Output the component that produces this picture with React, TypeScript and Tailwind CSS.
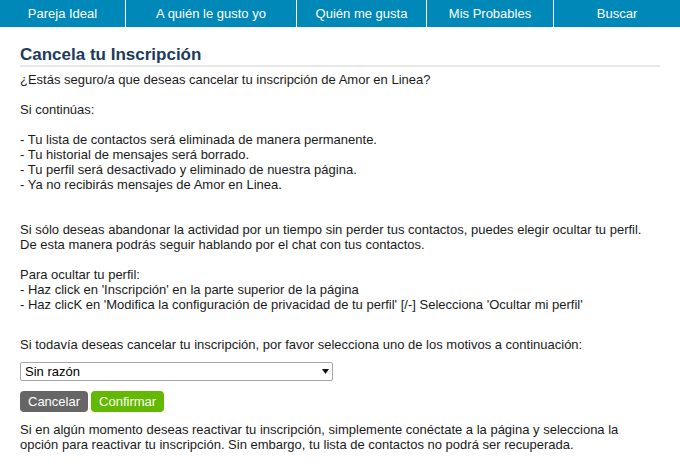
const tabs = [
  { label: "Pareja Ideal", w: "w-[125px]" },
  { label: "A quién le gusto yo", w: "w-[171px] border-l border-white" },
  { label: "Quién me gusta", w: "w-[130px] border-l border-white" },
  { label: "Mis Probables", w: "w-[127px] border-l border-white" },
  { label: "Buscar", w: "flex-1 border-l border-white" },
];

const consequences = [
  "- Tu lista de contactos será eliminada de manera permanente.",
  "- Tu historial de mensajes será borrado.",
  "- Tu perfil será desactivado y eliminado de nuestra página.",
  "- Ya no recibirás mensajes de Amor en Linea.",
];

export default function App() {
  return (
    <div className="w-[680px] h-[475px] overflow-hidden bg-white font-['Liberation_Sans',Arial,sans-serif] text-[13px] leading-[15px] text-[#1a1a1a]">
      <nav className="flex h-[27px] bg-[#0088b8] text-white">
        {tabs.map((tab) => (
          <a
            key={tab.label}
            href="#"
            className={`${tab.w} flex items-center justify-center`}
          >
            {tab.label}
          </a>
        ))}
      </nav>

      <main className="px-5 pt-[18px]">
        <h1 className="text-[17px] leading-5 font-bold text-[#1c3b5c] border-b-2 border-[#e8e8e8]">
          Cancela tu Inscripción
        </h1>

        <p className="mt-[5px]">
          ¿Estás seguro/a que deseas cancelar tu inscripción de Amor en Linea?
        </p>
        <p className="mt-[15px]">Si continúas:</p>

        <ul className="mt-[15px]">
          {consequences.map((item) => (
            <li key={item}>{item}</li>
          ))}
        </ul>

        <p className="mt-[30px]">
          Si sólo deseas abandonar la actividad por un tiempo sin perder tus
          contactos, puedes elegir ocultar tu perfil.
          <br />
          De esta manera podrás seguir hablando por el chat con tus contactos.
        </p>

        <p className="mt-[15px]">
          Para ocultar tu perfil:
          <br />
          - Haz click en 'Inscripción' en la parte superior de la página
          <br />
          - Haz clicK en 'Modifica la configuración de privacidad de tu perfil'
          [/-] Selecciona 'Ocultar mi perfil'
        </p>

        <p className="mt-[25px]">
          Si todavía deseas cancelar tu inscripción, por favor selecciona uno de
          los motivos a continuación:
        </p>

        <div className="mt-[10px] w-[313px] h-[19px] flex items-center justify-between pl-[4px] pr-[3px] border border-[#a6a6a6] rounded-[2px] text-black">
          <span>Sin razón</span>
          <svg width="7" height="5" viewBox="0 0 7 5">
            <polygon points="0,0 7,0 3.5,5" fill="#111" />
          </svg>
        </div>

        <div className="mt-[10px] flex gap-[3px]">
          <button className="h-[21px] px-2 rounded-[4px] bg-[#666666] text-white">
            Cancelar
          </button>
          <button className="h-[21px] px-2 rounded-[4px] bg-[#62b900] text-white">
            Confirmar
          </button>
        </div>

        <p className="mt-[10px]">
          Si en algún momento deseas reactivar tu inscripción, simplemente
          conéctate a la página y selecciona la
          <br />
          opción para reactivar tu inscripción. Sin embargo, tu lista de
          contactos no podrá ser recuperada.
        </p>
      </main>
    </div>
  );
}
